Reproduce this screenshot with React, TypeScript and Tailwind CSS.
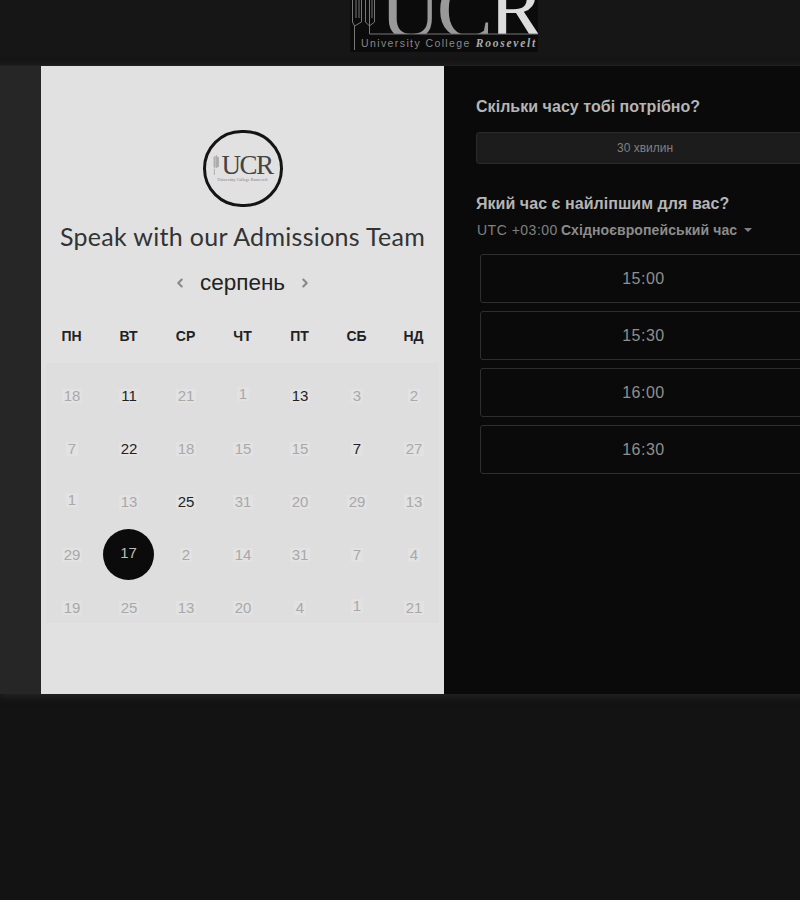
import { ChevronLeft, ChevronRight } from "lucide-react";

const days = ["ПН", "ВТ", "СР", "ЧТ", "ПТ", "СБ", "НД"];

const weeks = [
  [18, 11, 21, 1, 13, 3, 2],
  [7, 22, 18, 15, 15, 7, 27],
  [1, 13, 25, 31, 20, 29, 13],
  [29, 17, 2, 14, 31, 7, 4],
  [19, 25, 13, 20, 4, 1, 21],
];

// [row, col] of the days you can actually pick
const open = ["0-1", "0-4", "1-1", "1-5", "2-2"];

const slots = ["15:00", "15:30", "16:00", "16:30"];

function Tower({ className }: { className: string }) {
  return (
    <svg viewBox="0 0 14 50" className={className} fill="none" stroke="currentColor" strokeWidth="1.4">
      <path d="M2 6v22l2 4V4zM7 2v26l2 4V2zM11 6v22l2 2V6zM3 34v16" />
    </svg>
  );
}

function Logo() {
  return (
    <div className="relative w-[188px] h-[52px] bg-[#0b0b0b] overflow-hidden font-['Liberation_Serif',serif]">
      <svg viewBox="0 0 188 52" className="absolute inset-0 w-[188px] h-[52px]" fill="none" stroke="#777" strokeWidth="1">
        <path d="M2.5 0v22l2 4v24M11.5 0v22l-7 4M6 0v18M9 0v18" />
        <path d="M15.5 0v22l4 4M24.5 0v22l-5 4M19.5 0v34H188M22 0v18" />
      </svg>
      <div className="h-[34px] overflow-hidden pl-[30px]">
        <div className="-mt-[21px] text-[84px] leading-[62px] tracking-[-4px] whitespace-nowrap text-[#999]">
          UC<span className="text-[#ddd]">R</span>
        </div>
      </div>
      <div className="mt-[1px] pl-[11px] flex items-baseline whitespace-nowrap font-['Liberation_Sans',sans-serif] text-[10.5px] tracking-[1.4px] text-[#888]">
        University College
        <span className="ml-[5px] font-['Liberation_Serif',serif] italic font-bold text-[11.5px] tracking-[1.75px] text-[#aaa]">Roosevelt</span>
      </div>
    </div>
  );
}

function Badge() {
  return (
    <div className="w-[80px] h-[77px] rounded-full border-[3px] border-[#141414] flex flex-col items-center justify-center font-['Liberation_Serif',serif] text-[#444]">
      <div className="flex items-center -mt-[1px]">
        <Tower className="w-[8px] h-[20px] text-[#888] mr-[1px]" />
        <span className="text-[27px] leading-[22px] tracking-[-1.5px]">UCR</span>
      </div>
      <span className="mt-[2px] text-[4px] leading-[4px] tracking-[0.1px] text-[#777] whitespace-nowrap">University College Roosevelt</span>
    </div>
  );
}

function DayCell({ n, row, col }: { n: number; row: number; col: number }) {
  const raised = n === 1;
  if (n === 17) {
    return (
      <div className="h-[53px] flex items-center justify-center">
        <div className="w-[51px] h-[51px] rounded-full bg-[#0b0b0b] flex items-center justify-center text-[#bbb] text-[15px] pb-[3px]">
          {n}
        </div>
      </div>
    );
  }
  const isOpen = open.includes(`${row}-${col}`);
  return (
    <div className="h-[53px] flex items-center justify-center pl-[1px]">
      <span
        className={`text-[15px] leading-[14px] px-[2px] bg-[#e2e2e2] ${isOpen ? "text-[#222] font-medium" : "text-[#a9a9a9]"} ${raised ? "-translate-y-[2px]" : ""}`}
      >
        {n}
      </span>
    </div>
  );
}

export default function App() {
  return (
    <div className="w-[800px] h-[900px] overflow-hidden bg-[#131313] font-['Liberation_Sans',sans-serif]">
      <header className="h-[66px] bg-[#161616] border-b border-[#1e1e1e] pl-[350px]">
        <Logo />
      </header>

      <main className="flex h-[628px] w-[1000px] shadow-[0_2px_8px_rgba(60,60,60,0.5)]">
        <div className="w-[41px] bg-[#262626]" />

        <section className="w-[403px] bg-[#e1e1e1] flex flex-col items-center pt-[64px]">
          <Badge />
          <h1 className="mt-[13px] text-[25px] leading-[32px] tracking-[0.3px] font-['Lato',sans-serif] text-[#333] whitespace-nowrap">
            Speak with our Admissions Team
          </h1>
          <div className="mt-[17px] h-[28px] flex items-center text-[#222]">
            <ChevronLeft size={14} strokeWidth={3.5} className="text-[#888]" />
            <span className="mx-[13px] text-[22.5px] leading-[28px]">серпень</span>
            <ChevronRight size={14} strokeWidth={3.5} className="text-[#888]" />
          </div>

          <div className="w-[399px] mt-[29px] h-[36px] grid grid-cols-7 text-[14px] font-bold text-[#222]">
            {days.map((d) => (
              <div key={d} className="text-center leading-[20px]">
                {d}
              </div>
            ))}
          </div>

          <div className="w-[393px] mt-[1px] h-[260px] bg-[#dedede]">
            <div className="-mx-[3px] grid grid-cols-[repeat(7,57px)] pt-[6px]">
              {weeks.map((w, r) =>
                w.map((n, c) => <DayCell key={`${r}-${c}`} n={n} row={r} col={c} />)
              )}
            </div>
          </div>
        </section>

        <section className="flex-1 bg-[#0a0a0a] pt-[31px] pl-[32px] text-[#b5b5b5]">
          <h2 className="text-[16px] leading-[20px] font-bold tracking-[0.04px]">Скільки часу тобі потрібно?</h2>
          <div className="mt-[15px] w-[338px] h-[32px] rounded-[3px] border border-[#2a2a2a] bg-[#1c1c1c] flex items-center justify-center text-[12px] text-[#808080]">
            30 хвилин
          </div>

          <h2 className="mt-[30px] text-[16px] leading-[20px] font-bold tracking-[0.05px]">Який час є найліпшим для вас?</h2>
          <div className="mt-[6px] ml-[1px] flex items-center text-[14px] leading-[20px] text-[#808080]">
            <span className="tracking-[0.5px]">UTC +03:00</span>
            <span className="ml-[3px] font-bold tracking-[0.1px] text-[#8c8c8c]">Східноєвропейський час</span>
            <svg viewBox="0 0 8 4" className="ml-[7px] w-[8px] h-[4px] fill-[#808080]">
              <path d="M0 0h8L4 4z" />
            </svg>
          </div>

          <div className="mt-[14px] ml-[4px] flex flex-col gap-[8px]">
            {slots.map((s) => (
              <div
                key={s}
                className="w-[327px] h-[49px] rounded-[3px] border border-[#2e2e2e] flex items-center justify-center text-[16px] tracking-[0.5px] text-[#8f8f8f]"
              >
                {s}
              </div>
            ))}
          </div>
        </section>
      </main>
    </div>
  );
}
